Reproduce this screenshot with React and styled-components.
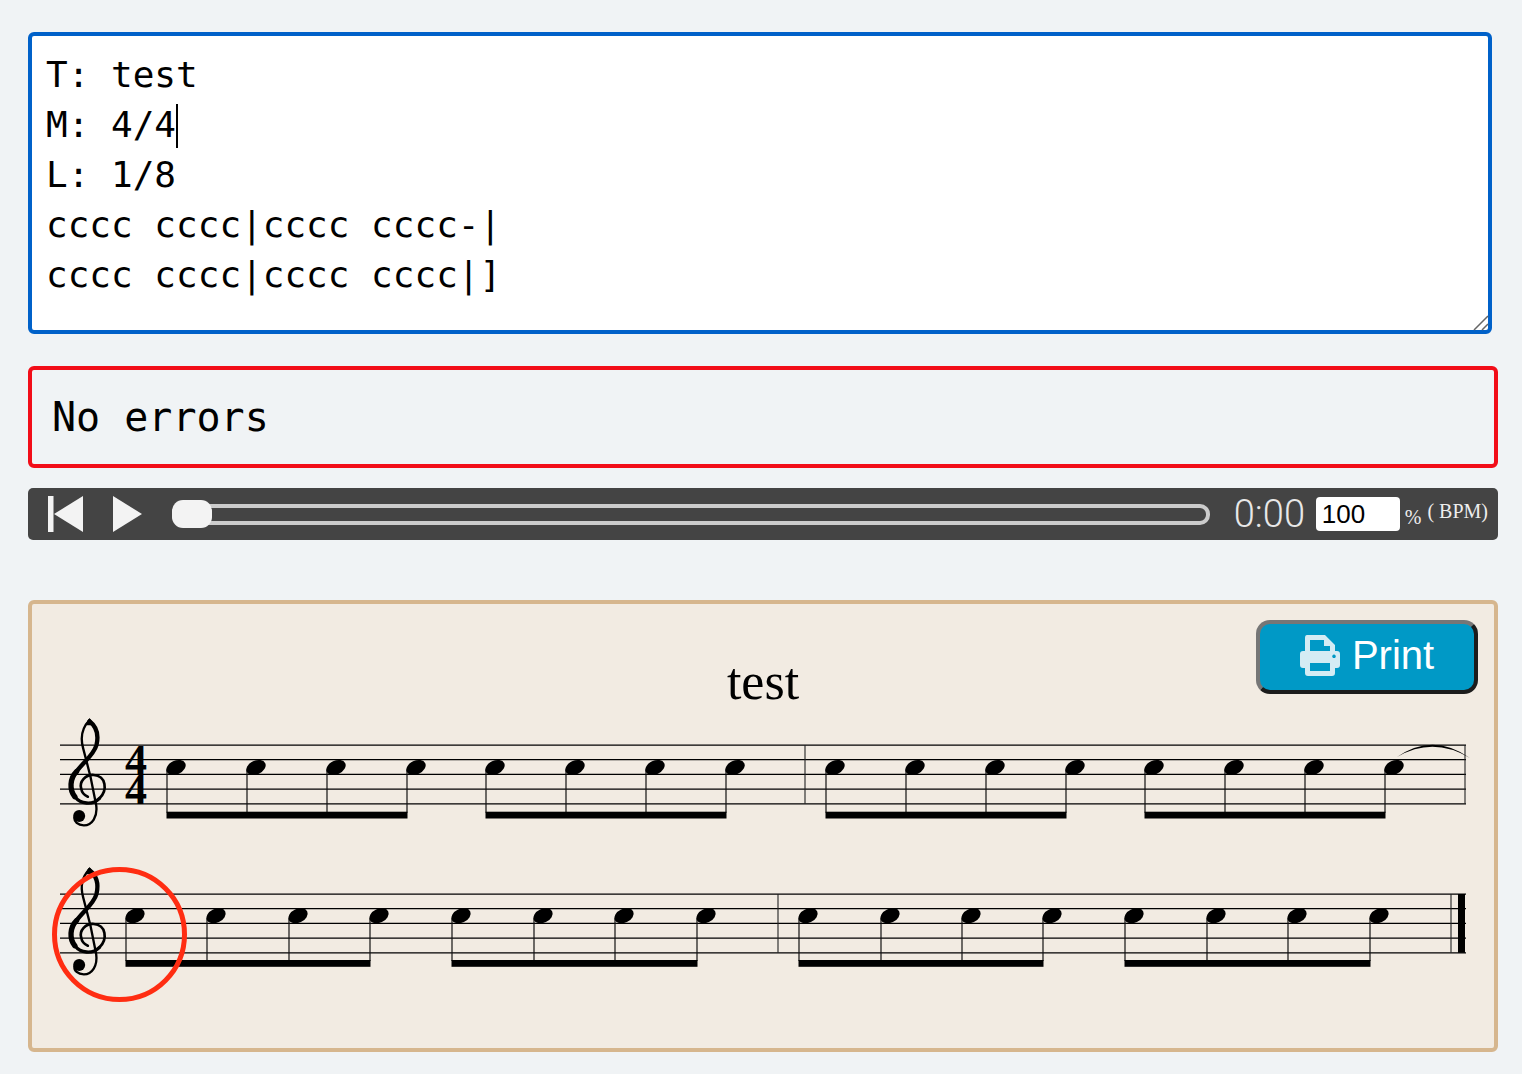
import React from "react";
import styled, { createGlobalStyle } from "styled-components";

const GlobalStyle = createGlobalStyle`
  html, body { margin: 0; padding: 0; background: #f0f3f5; }
  body { font-family: "Liberation Sans", Arial, sans-serif; }
`;

const Page = styled.main`
  display: flex;
  flex-direction: column;
  width: 1470px;
  padding: 32px 24px 22px 28px;
`;

const EditorWrap = styled.div`
  position: relative;
  width: 1464px;
  height: 302px;
  margin-bottom: 32px;
`;

const Editor = styled.textarea`
  display: block;
  box-sizing: border-box;
  width: 100%;
  height: 100%;
  margin: 0;
  padding: 14px 14px;
  border: 4px solid #0061c9;
  border-radius: 6px;
  outline: none;
  background: #fff;
  color: #000;
  font: 36px/50px "DejaVu Sans Mono", monospace;
  resize: none;
`;

const Caret = styled.span`
  position: absolute;
  left: 148px;
  top: 72px;
  width: 2px;
  height: 44px;
  background: #000;
`;

const Grip = styled.svg`
  position: absolute;
  right: 3px;
  bottom: 3px;
  width: 16px;
  height: 16px;
  stroke: #666;
  stroke-width: 1.5;
  fill: none;
  pointer-events: none;
`;

const ErrorBox = styled.div`
  box-sizing: border-box;
  display: flex;
  align-items: center;
  height: 102px;
  margin-bottom: 20px;
  padding: 0 20px;
  border: 4px solid #f20d18;
  border-radius: 6px;
  font: 40px "DejaVu Sans Mono", monospace;
  color: #000;
`;

const Player = styled.div`
  display: flex;
  align-items: center;
  height: 52px;
  margin-bottom: 60px;
  padding: 0 10px 0 20px;
  border-radius: 5px;
  background: #444;
`;

const PlayerIcon = styled.svg`
  display: block;
  flex: none;
  margin-right: 30px;
  fill: #f3f3f3;
`;

const Track = styled.div`
  position: relative;
  flex: 1;
  box-sizing: border-box;
  height: 21px;
  border: 4px solid #ccc;
  border-radius: 10px;
`;

const Thumb = styled.div`
  position: absolute;
  left: -4px;
  top: -7.5px;
  width: 40px;
  height: 28px;
  border-radius: 11px;
  background: #f3f3f3;
`;

const Time = styled.span`
  width: 70px;
  margin: 0 12px 0 24px;
  color: #e8e8e8;
  font: 300 38px Roboto, "Liberation Sans", sans-serif;
  white-space: nowrap;
`;

const Tempo = styled.input`
  box-sizing: border-box;
  width: 84px;
  height: 34px;
  padding: 0 6px;
  border: 0;
  border-radius: 4px;
  background: #fff;
  color: #000;
  font: 26px "Liberation Sans", Arial, sans-serif;
  outline: none;
`;

const Percent = styled.span`
  margin: 6px 0 0 5px;
  color: #eee;
  font: 20px "Liberation Serif", serif;
`;

const Bpm = styled.span`
  margin: -5px 0 0 6px;
  color: #eee;
  font: 20px "Liberation Serif", serif;
  white-space: pre;
`;

const Score = styled.section`
  position: relative;
  box-sizing: border-box;
  height: 452px;
  padding: 48px 0 0 28px;
  border: 4px solid #d6b68e;
  border-radius: 6px;
  background: #f2ebe2;
`;

const Title = styled.h1`
  margin: 0 0 3px -28px;
  height: 60px;
  color: #000;
  font: 400 52px/60px "Liberation Serif", serif;
  text-align: center;
`;

const PrintButton = styled.button`
  position: absolute;
  top: 16px;
  right: 16px;
  box-sizing: border-box;
  display: flex;
  align-items: center;
  justify-content: center;
  gap: 12px;
  width: 222px;
  height: 74px;
  padding: 0 0 3px;
  border-style: solid;
  border-width: 4px;
  border-color: #767676 #1c1c1c #1c1c1c #767676;
  border-radius: 14px;
  background: #0099c6;
  color: #fff;
  font: 40px "Liberation Sans", Arial, sans-serif;
`;

const PrinterIcon = styled.svg`
  display: block;
  fill: #d4ecf4;
`;

const StaffSvg = styled.svg`
  display: block;
  width: 1420px;
  height: 120px;
  margin-bottom: 29px;
  overflow: visible;
`;

const Marker = styled.svg`
  position: absolute;
  left: 20px;
  top: 263px;
  width: 136px;
  height: 136px;
  pointer-events: none;
`;

const TOP = 30;
const GAP = 14.7;
const lines = [0, 1, 2, 3, 4].map((i) => TOP + i * GAP);

function Clef() {
  return (
    <g transform={`translate(40.5 ${TOP - 35}) scale(${1 / 3})`} fill="none" stroke="#000" strokeLinecap="round">
      <path d="M147 30 C128 50 118 80 128 115 L150 200 L167 285 C172 320 155 346 130 346 C112 346 100 335 102 322" strokeWidth="7" />
      <path d="M147 34 C168 50 175 75 168 105 C160 135 125 160 108 185" strokeWidth="13" />
      <path d="M108 185 C88 205 86 240 103 260" strokeWidth="16" />
      <path d="M103 260 C120 282 155 287 177 265" strokeWidth="10" />
      <path d="M177 265 C202 240 197 198 160 195 C135 193 116 215 122 235 C124 248 132 256 142 260" strokeWidth="8" />
      <path d="M147 24 L133 46 L163 46 Z" fill="#000" stroke="none" />
      <circle cx="116" cy="318" r="18" fill="#000" stroke="none" />
    </g>
  );
}

function Staff({ stems, bars, head, beamTop, timeSig, slur, finalBar }) {
  const beams = [];
  for (let i = 0; i < stems.length; i += 4) beams.push([stems[i], stems[i + 3]]);
  return (
    <StaffSvg viewBox="60 0 1420 120">
      {lines.map((y) => (
        <line key={y} x1="60" x2="1466" y1={y} y2={y} stroke="#000" strokeWidth="1.25" />
      ))}
      <Clef />
      {timeSig && (
        <g fontFamily="Liberation Serif, serif" fontWeight="700" fontSize="44" fill="#000">
          <text x="125" y={TOP + 29.5}>4</text>
          <text x="125" y={TOP + 59}>4</text>
        </g>
      )}
      {bars.map((x) => (
        <line key={x} x1={x} x2={x} y1={TOP} y2={lines[4]} stroke="#222" strokeWidth="1.1" />
      ))}
      {stems.map((x) => (
        <g key={x}>
          <line x1={x} x2={x} y1={TOP + head + 2} y2={TOP + beamTop + 1} stroke="#111" strokeWidth="1.2" />
          <ellipse cx={x + 9} cy={TOP + head} rx="10.2" ry="6.9" transform={`rotate(-25 ${x + 9} ${TOP + head})`} fill="#000" />
        </g>
      ))}
      {beams.map(([a, b]) => (
        <rect key={a} x={a - 0.5} y={TOP + beamTop} width={b - a + 1} height="6.8" fill="#000" />
      ))}
      {slur && <path d="M1397 42 Q1433 17 1470 43 Q1433 21 1397 42 Z" fill="#000" />}
      {finalBar && <rect x="1458" y={TOP} width="7" height={GAP * 4} fill="#000" />}
    </StaffSvg>
  );
}

const firstStems = [167, 247, 327, 407, 486, 566, 646, 726, 826, 906, 986, 1066, 1145, 1225, 1305, 1385];
const secondStems = [126, 207, 289, 370, 452, 534, 615, 697, 799, 881, 962, 1043, 1125, 1207, 1288, 1370];
const abc = "T: test\nM: 4/4\nL: 1/8\ncccc cccc|cccc cccc-|\ncccc cccc|cccc cccc|]";

export default function App() {
  return (
    <Page>
      <GlobalStyle />
      <EditorWrap>
        <Editor defaultValue={abc} spellCheck={false} />
        <Caret />
        <Grip viewBox="0 0 16 16">
          <path d="M1 15 L15 1 M9 15 L15 9" />
        </Grip>
      </EditorWrap>
      <ErrorBox>No errors</ErrorBox>
      <Player>
        <PlayerIcon width="35" height="36" viewBox="0 0 35 36">
          <rect x="0" y="0" width="5.5" height="36" />
          <path d="M35 0 V36 L6 18 Z" />
        </PlayerIcon>
        <PlayerIcon width="29" height="36" viewBox="0 0 29 36">
          <path d="M0 0 L29 18 L0 36 Z" />
        </PlayerIcon>
        <Track>
          <Thumb />
        </Track>
        <Time>0:00</Time>
        <Tempo defaultValue="100" />
        <Percent>%</Percent>
        <Bpm>( BPM)</Bpm>
      </Player>
      <Score>
        <PrintButton>
          <PrinterIcon width="40" height="41" viewBox="0 0 40 41">
            <path
              fillRule="evenodd"
              d="M7 0 H25 L35 10 V16 H37 Q40 16 40 19 V30 Q40 33 37 33 H35 V38 Q35 41 32 41 H8 Q5 41 5 38 V33 H3 Q0 33 0 30 V19 Q0 16 3 16 H5 V3 Q5 0 7 0 Z M10 5 V16 H30 V11 H24 V5 Z M10 28 V36 H30 V28 Z M34 19.5 a1.8 1.8 0 1 0 0.01 0 Z"
            />
          </PrinterIcon>
          Print
        </PrintButton>
        <Title>test</Title>
        <Staff stems={firstStems} bars={[805, 1465]} head={22.5} beamTop={66.7} timeSig slur />
        <Staff stems={secondStems} bars={[778, 1451]} head={21.8} beamTop={66} finalBar />
        <Marker viewBox="0 0 136 136">
          <circle cx="67.5" cy="67.5" r="65" fill="none" stroke="#ff2d12" strokeWidth="5" />
        </Marker>
      </Score>
    </Page>
  );
}
